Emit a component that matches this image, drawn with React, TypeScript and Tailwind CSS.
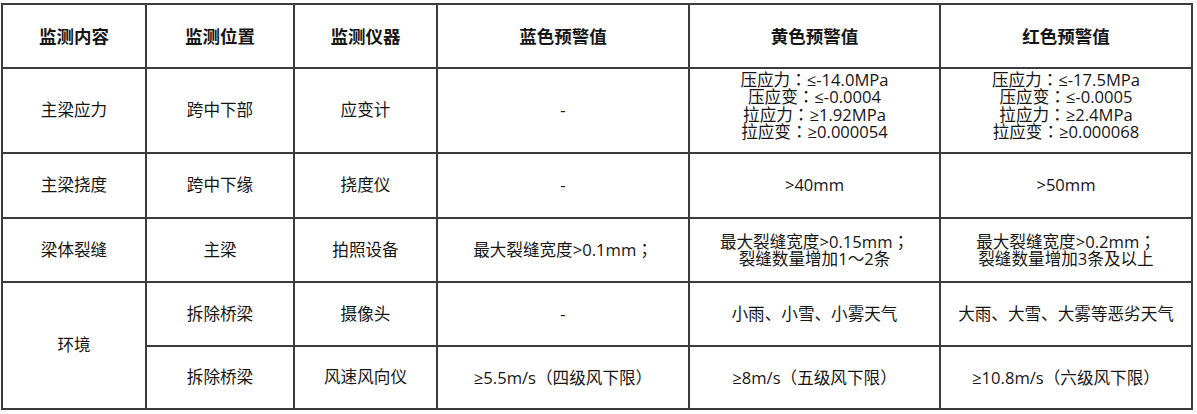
const font = { fontFamily: '"Open Sans", "Noto Sans CJK SC", sans-serif' };
const tc = { fontFamily: '"Noto Sans CJK TC", sans-serif' };

const headers = ['监测内容', '监测位置', '监测仪器', '蓝色预警值', '黄色预警值', '红色预警值'];

// fullwidth punctuation centred in its box, as in the source document
function T({ s }: { s: string }) {
  const parts = s.split(/([：；（）])/);
  return (
    <>
      {parts.map((p, i) =>
        /^[：；（）]$/.test(p) ? (
          <span key={i} style={tc}>{p}</span>
        ) : (
          <span key={i}>{p}</span>
        )
      )}
    </>
  );
}

function Lines({ items, className = '' }: { items: string[]; className?: string }) {
  return (
    <div className={`flex flex-col items-center leading-[17.3px] ${className}`}>
      {items.map((t) => (
        <div key={t} className="h-[17.3px] whitespace-nowrap">
          <T s={t} />
        </div>
      ))}
    </div>
  );
}

const td = 'border-2 border-[#3c3c3c] text-center align-middle p-0 whitespace-nowrap';

export default function App() {
  return (
    <div className="bg-white w-[1197px] h-[414px] pt-[3px] pl-[1px] text-[#161616]" style={font}>
      <table className="table-fixed border-collapse border-2 border-[#1e1e1e] w-[1190px] text-[16.6px]">
        <colgroup>
          <col className="w-[144px]" />
          <col className="w-[148px]" />
          <col className="w-[143px]" />
          <col className="w-[252px]" />
          <col className="w-[251px]" />
          <col className="w-[252px]" />
        </colgroup>
        <thead>
          <tr className="h-[64px]">
            {headers.map((h) => (
              <th key={h} className={`${td} font-bold text-[17.5px]`}>{h}</th>
            ))}
          </tr>
        </thead>
        <tbody>
          <tr className="h-[85px]">
            <td className={td}>主梁应力</td>
            <td className={td}>跨中下部</td>
            <td className={td}>应变计</td>
            <td className={td}>-</td>
            <td className={td}>
              <Lines
                className="pb-[10px]"
                items={['压应力：≤-14.0MPa', '压应变：≤-0.0004', '拉应力：≥1.92MPa', '拉应变：≥0.000054']}
              />
            </td>
            <td className={td}>
              <Lines
                className="pb-[10px]"
                items={['压应力：≤-17.5MPa', '压应变：≤-0.0005', '拉应力：≥2.4MPa', '拉应变：≥0.000068']}
              />
            </td>
          </tr>
          <tr className="h-[65px]">
            <td className={td}>主梁挠度</td>
            <td className={td}>跨中下缘</td>
            <td className={td}>挠度仪</td>
            <td className={td}>-</td>
            <td className={td}>&gt;40mm</td>
            <td className={td}>&gt;50mm</td>
          </tr>
          <tr className="h-[64px]">
            <td className={td}>梁体裂缝</td>
            <td className={td}>主梁</td>
            <td className={td}>拍照设备</td>
            <td className={td}><T s="最大裂缝宽度>0.1mm；" /></td>
            <td className={td}>
              <Lines items={['最大裂缝宽度>0.15mm；', '裂缝数量增加1～2条']} />
            </td>
            <td className={td}>
              <Lines items={['最大裂缝宽度>0.2mm；', '裂缝数量增加3条及以上']} />
            </td>
          </tr>
          <tr className="h-[64px]">
            <td className={td} rowSpan={2}>环境</td>
            <td className={td}>拆除桥梁</td>
            <td className={td}>摄像头</td>
            <td className={td}>-</td>
            <td className={td}>小雨、小雪、小雾天气</td>
            <td className={td}>大雨、大雪、大雾等恶劣天气</td>
          </tr>
          <tr className="h-[63px]">
            <td className={td}>拆除桥梁</td>
            <td className={td}>风速风向仪</td>
            <td className={td}><T s="≥5.5m/s（四级风下限）" /></td>
            <td className={td}><T s="≥8m/s（五级风下限）" /></td>
            <td className={td}><T s="≥10.8m/s（六级风下限）" /></td>
          </tr>
        </tbody>
      </table>
    </div>
  );
}
